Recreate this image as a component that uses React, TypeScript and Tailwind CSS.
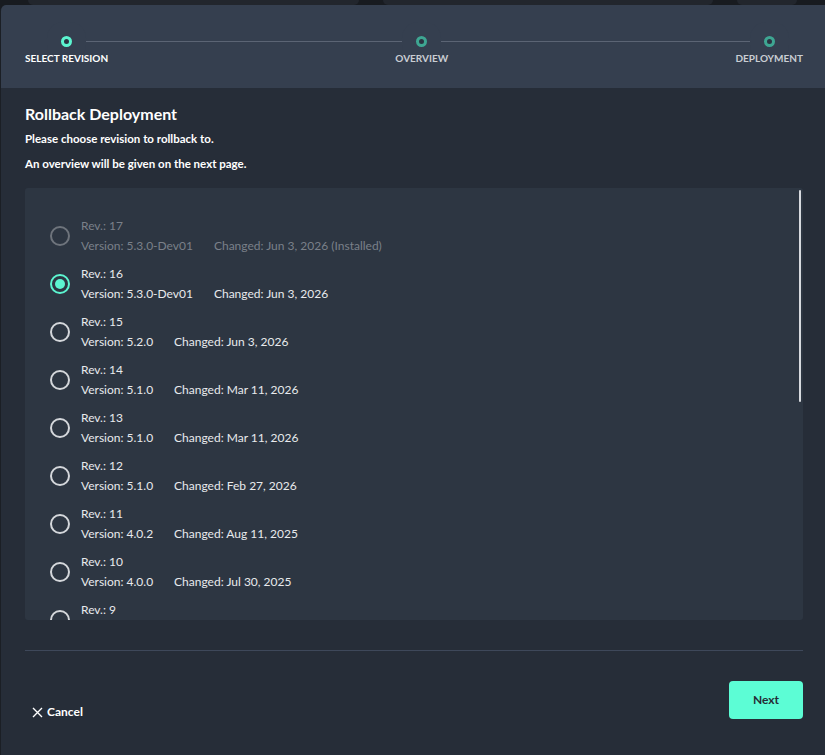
import React, { useState } from "react";

type Revision = {
  rev: number;
  version: string;
  changed: string;
  installed?: boolean;
};

const revisions: Revision[] = [
  { rev: 17, version: "5.3.0-Dev01", changed: "Jun 3, 2026", installed: true },
  { rev: 16, version: "5.3.0-Dev01", changed: "Jun 3, 2026" },
  { rev: 15, version: "5.2.0", changed: "Jun 3, 2026" },
  { rev: 14, version: "5.1.0", changed: "Mar 11, 2026" },
  { rev: 13, version: "5.1.0", changed: "Mar 11, 2026" },
  { rev: 12, version: "5.1.0", changed: "Feb 27, 2026" },
  { rev: 11, version: "4.0.2", changed: "Aug 11, 2025" },
  { rev: 10, version: "4.0.0", changed: "Jul 30, 2025" },
  { rev: 9, version: "4.0.0", changed: "Jul 12, 2025" },
  { rev: 8, version: "3.9.1", changed: "Jun 2, 2025" },
];

const steps = [
  { label: "SELECT REVISION", active: true },
  { label: "OVERVIEW", active: false },
  { label: "DEPLOYMENT", active: false },
];

function Stepper() {
  return (
    <div className="relative flex items-start justify-between pl-[24px] pr-[22px] pt-[31px]">
      {steps.map((s, i) => (
        <div key={s.label} className="relative flex flex-col items-center">
          {/* connector to the next step, masked around each dot */}
          {i < steps.length - 1 && (
            <div
              className={`absolute left-1/2 top-[5px] h-px bg-[#5b6474] ${
                i === 0 ? "w-[356px]" : "w-[348px]"
              }`}
            />
          )}
          <div
            className={`relative z-10 h-[11px] w-[11px] rounded-full border-[3px] bg-[#2b3442] shadow-[0_0_0_14px_#353f4f] ${
              s.active ? "border-[#5cf5d0]" : "border-[#3ea692]"
            }`}
          />
          <div
            className={`relative z-10 mt-[5px] whitespace-nowrap text-[10px] font-bold leading-[12px] ${
              s.active ? "text-white" : "text-[#c9cdd3]"
            }`}
          >
            {s.label}
          </div>
        </div>
      ))}
    </div>
  );
}

function Radio({ checked, disabled }: { checked: boolean; disabled?: boolean }) {
  return (
    <div
      className={`flex h-[20px] w-[20px] shrink-0 items-center justify-center rounded-full border-2 ${
        checked
          ? "border-[#5cf5d0]"
          : disabled
          ? "border-[#6e747c]"
          : "border-[#d4d7db]"
      }`}
    >
      {checked && <div className="h-[10px] w-[10px] rounded-full bg-[#5cf5d0]" />}
    </div>
  );
}

export default function App() {
  const [selected, setSelected] = useState(16);

  return (
    <div
      className="flex h-[755px] w-[825px] flex-col overflow-hidden bg-[#181b20]"
      style={{ fontFamily: "Lato, 'Open Sans', sans-serif" }}
    >
      {/* cards peeking out behind the dialog */}
      <div className="flex h-[5px] shrink-0 gap-[24px] px-[28px]">
        <div className="h-[5px] flex-1 rounded-b-[8px] bg-[#22262d]" />
        <div className="h-[5px] flex-1 rounded-b-[8px] bg-[#22262d]" />
        <div className="h-[5px] w-[60px] rounded-b-[8px] bg-[#22262d]" />
      </div>

      <div className="flex flex-1 flex-col overflow-hidden rounded-tl-[6px] border-l border-[#1b1f25] bg-[#262d38]">
        {/* Wizard header */}
        <div className="h-[83px] shrink-0 overflow-hidden bg-[#353f4f]">
          <Stepper />
        </div>

        {/* Body */}
        <div className="flex flex-1 flex-col pl-[24px] pr-[22px]">
          <h1 className="mt-[16px] text-[16px] font-bold leading-[20px] text-white">
            Rollback Deployment
          </h1>
          <p className="mt-[8px] text-[11.5px] font-bold leading-[14px] text-white">
            Please choose revision to rollback to.
          </p>
          <p className="mt-[11px] text-[11.5px] font-bold leading-[14px] text-white">
            An overview will be given on the next page.
          </p>

          <div className="relative mt-[17px] h-[432px] overflow-hidden rounded-[3px] bg-[#2d3642]">
            <div className="flex flex-col pl-[25px] pt-[24px]">
              {revisions.map((r) => {
                const checked = selected === r.rev;
                return (
                  <div
                    key={r.rev}
                    className="flex h-[48px] cursor-pointer items-center gap-[11px]"
                    onClick={() => !r.installed && setSelected(r.rev)}
                  >
                    <Radio checked={checked} disabled={r.installed} />
                    <div
                      className={`flex flex-col gap-[6px] text-[12px] leading-[14px] ${
                        r.installed ? "text-[#7a8089]" : "text-[#e8eaed]"
                      }`}
                    >
                      <span>Rev.: {r.rev}</span>
                      <span className="flex gap-[21px]">
                        <span>Version: {r.version}</span>
                        <span>
                          Changed: {r.changed}
                          {r.installed ? " (Installed)" : ""}
                        </span>
                      </span>
                    </div>
                  </div>
                );
              })}
            </div>
            {/* scroll thumb */}
            <div className="absolute right-[2px] top-[2px] h-[212px] w-[2px] rounded-full bg-[#d7dade]" />
          </div>

          <div className="mt-[30px] h-px bg-[#3e485a]" />

          <div className="mt-[27px] flex items-center justify-between">
            <button className="mt-[25px] flex items-center gap-[4px] pl-[7px] text-[12px] font-bold text-white">
              <svg width="11" height="11" viewBox="0 0 11 11" fill="none">
                <path d="M1 1L10 10M10 1L1 10" stroke="white" strokeWidth="1.4" />
              </svg>
              Cancel
            </button>
            <button className="h-[38px] w-[74px] rounded-[4px] bg-[#5cfdd5] text-[12px] font-bold text-[#262c36]">
              Next
            </button>
          </div>
        </div>
      </div>
    </div>
  );
}
